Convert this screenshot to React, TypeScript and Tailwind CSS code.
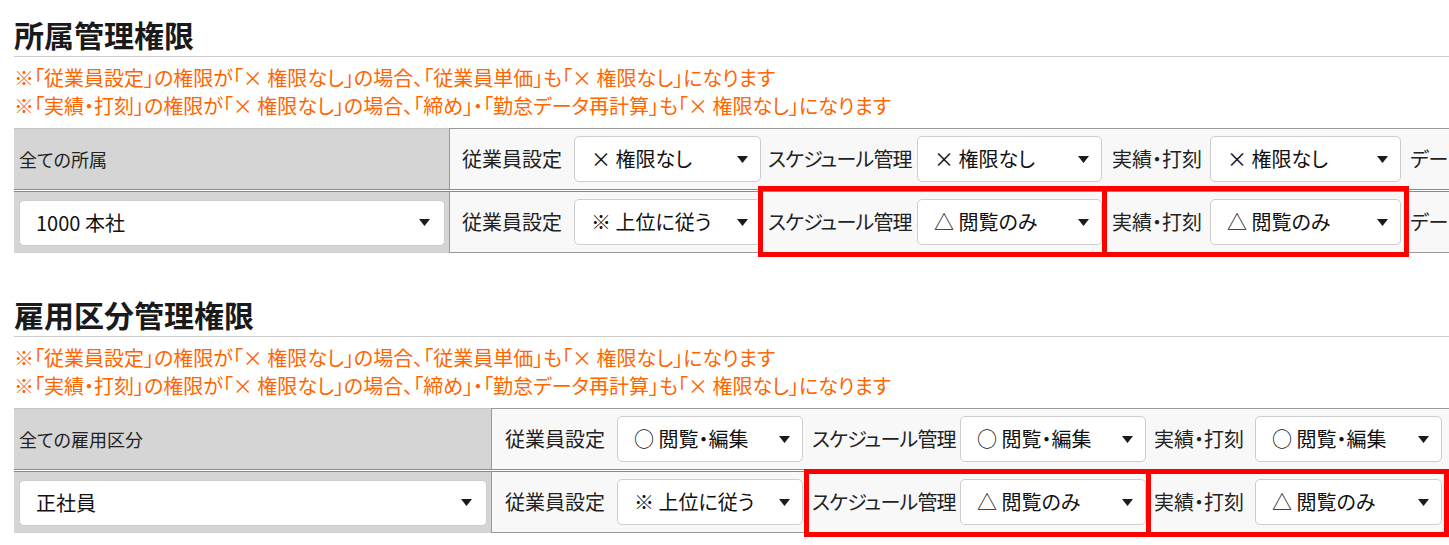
import { ReactNode } from "react"

type Col = { label: string; lw: string; sw: string }
type Section = {
  title: string
  leftW: string
  allLabel: string
  current: string
  cols: Col[]
  top: string[]
  row: string[]
  marks: (string | null)[]
}

const notes = [
  "※「従業員設定」の権限が「× 権限なし」の場合、「従業員単価」も「× 権限なし」になります",
  "※「実績・打刻」の権限が「× 権限なし」の場合、「締め」・「勤怠データ再計算」も「× 権限なし」になります",
]

const sections: Section[] = [
  {
    title: "所属管理権限",
    leftW: "w-[435px]",
    allLabel: "全ての所属",
    current: "1000 本社",
    cols: [
      { label: "従業員設定", lw: "w-[124px] pl-[12px]", sw: "w-[187px]" },
      { label: "スケジュール管理", lw: "w-[156px] pl-[7px] tracking-[-0.8px]", sw: "w-[185px]" },
      { label: "実績・打刻", lw: "w-[108px] pl-[10px]", sw: "w-[191px]" },
      { label: "データ再計算", lw: "w-[130px] pl-[9px]", sw: "w-[187px]" },
    ],
    top: ["× 権限なし", "× 権限なし", "× 権限なし", "× 権限なし"],
    row: ["※ 上位に従う", "△ 閲覧のみ", "△ 閲覧のみ", "※ 上位に従う"],
    marks: [
      null,
      "-left-[3px] -right-[5px] -top-[6px] -bottom-[5px]",
      "left-0 -right-[8px] -top-[6px] -bottom-[5px]",
      null,
    ],
  },
  {
    title: "雇用区分管理権限",
    leftW: "w-[477px]",
    allLabel: "全ての雇用区分",
    current: "正社員",
    cols: [
      { label: "従業員設定", lw: "w-[125px] pl-[13px]", sw: "w-[186px]" },
      { label: "スケジュール管理", lw: "w-[157px] pl-[9px] tracking-[-0.8px]", sw: "w-[186px]" },
      { label: "実績・打刻", lw: "w-[109px] pl-[8px]", sw: "w-[187px]" },
      { label: "データ再計算", lw: "w-[130px] pl-[9px]", sw: "w-[187px]" },
    ],
    top: ["○ 閲覧・編集", "○ 閲覧・編集", "○ 閲覧・編集", "○ 閲覧・編集"],
    row: ["※ 上位に従う", "△ 閲覧のみ", "△ 閲覧のみ", "※ 上位に従う"],
    marks: [
      null,
      "left-[1px] -right-[5px] -top-[3px] -bottom-[5px]",
      "left-0 -right-[7px] -top-[3px] -bottom-[5px]",
      null,
    ],
  },
]

const Caret = () => (
  <svg width="11" height="7" viewBox="0 0 11 7" className="shrink-0">
    <path d="M0 0h11L5.5 7z" fill="#1a1a1a" />
  </svg>
)

const Select = ({ value, className = "" }: { value: string; className?: string }) => (
  <div
    className={`flex h-[46px] shrink-0 items-center justify-between rounded-[5px] border border-[#cdcdcd] bg-white pl-[16px] pr-[12px] text-[20px] text-[#111] ${className}`}
  >
    <span className="whitespace-nowrap">{value}</span>
    <Caret />
  </div>
)

const Group = ({ col, value, mark }: { col: Col; value: string; mark?: string | null }) => (
  <div className="relative flex shrink-0 items-center self-stretch">
    <div className={`shrink-0 whitespace-nowrap text-[20px] text-[#222] ${col.lw}`}>{col.label}</div>
    <Select value={value} className={col.sw} />
    {mark && <div className={`pointer-events-none absolute border-[5px] border-[#ff0000] ${mark}`} />}
  </div>
)

const Row = ({ left, children, first }: { left: ReactNode; children: ReactNode; first?: boolean }) => (
  <div
    className={
      first
        ? "flex h-[64px] border-b-[3px] border-double border-[#8a8a8a]"
        : "flex h-[61px]"
    }
  >
    {left}
    <div
      className={
        first
          ? "flex min-w-0 flex-1 border-l border-t border-[#999] bg-[#f8f8f8]"
          : "flex min-w-0 flex-1 border-b border-l border-[#999] bg-[#f8f8f8]"
      }
    >
      {children}
    </div>
  </div>
)

const PermSection = ({ s, className = "" }: { s: Section; className?: string }) => (
  <section className={className}>
    <h2 className="border-b border-[#cccccc] pb-[2px] pt-[14px] text-[30px] font-bold leading-[40px] text-[#1a1a1a]">
      {s.title}
    </h2>
    <div className="mt-[7px] text-[20px] leading-[28px] text-[#ff6600]">
      {notes.map((n) => (
        <p key={n} className="whitespace-nowrap">{n}</p>
      ))}
    </div>

    <div className="mt-[8px]">
      <Row
        first
        left={
          <div className={`flex shrink-0 items-center border-t border-[#c6c6c6] bg-[#d4d5d4] pl-[5px] text-[18px] text-[#222] ${s.leftW}`}>
            {s.allLabel}
          </div>
        }
      >
        {s.cols.map((c, i) => (
          <Group key={c.label} col={c} value={s.top[i]} />
        ))}
      </Row>
      <Row
        left={
          <div className={`flex shrink-0 items-center bg-[#d4d5d4] pl-[5px] pr-[4px] ${s.leftW}`}>
            <Select value={s.current} className="flex-1 pr-[14px]" />
          </div>
        }
      >
        {s.cols.map((c, i) => (
          <Group key={c.label} col={c} value={s.row[i]} mark={s.marks[i]} />
        ))}
      </Row>
    </div>
  </section>
)

export default function App() {
  return (
    <div className="h-screen w-full overflow-hidden bg-white pl-[14px] font-['Noto_Sans_CJK_JP','Noto_Sans',sans-serif] [font-feature-settings:'palt']">
      <PermSection s={sections[0]} />
      <PermSection s={sections[1]} className="mt-[27px]" />
    </div>
  )
}
